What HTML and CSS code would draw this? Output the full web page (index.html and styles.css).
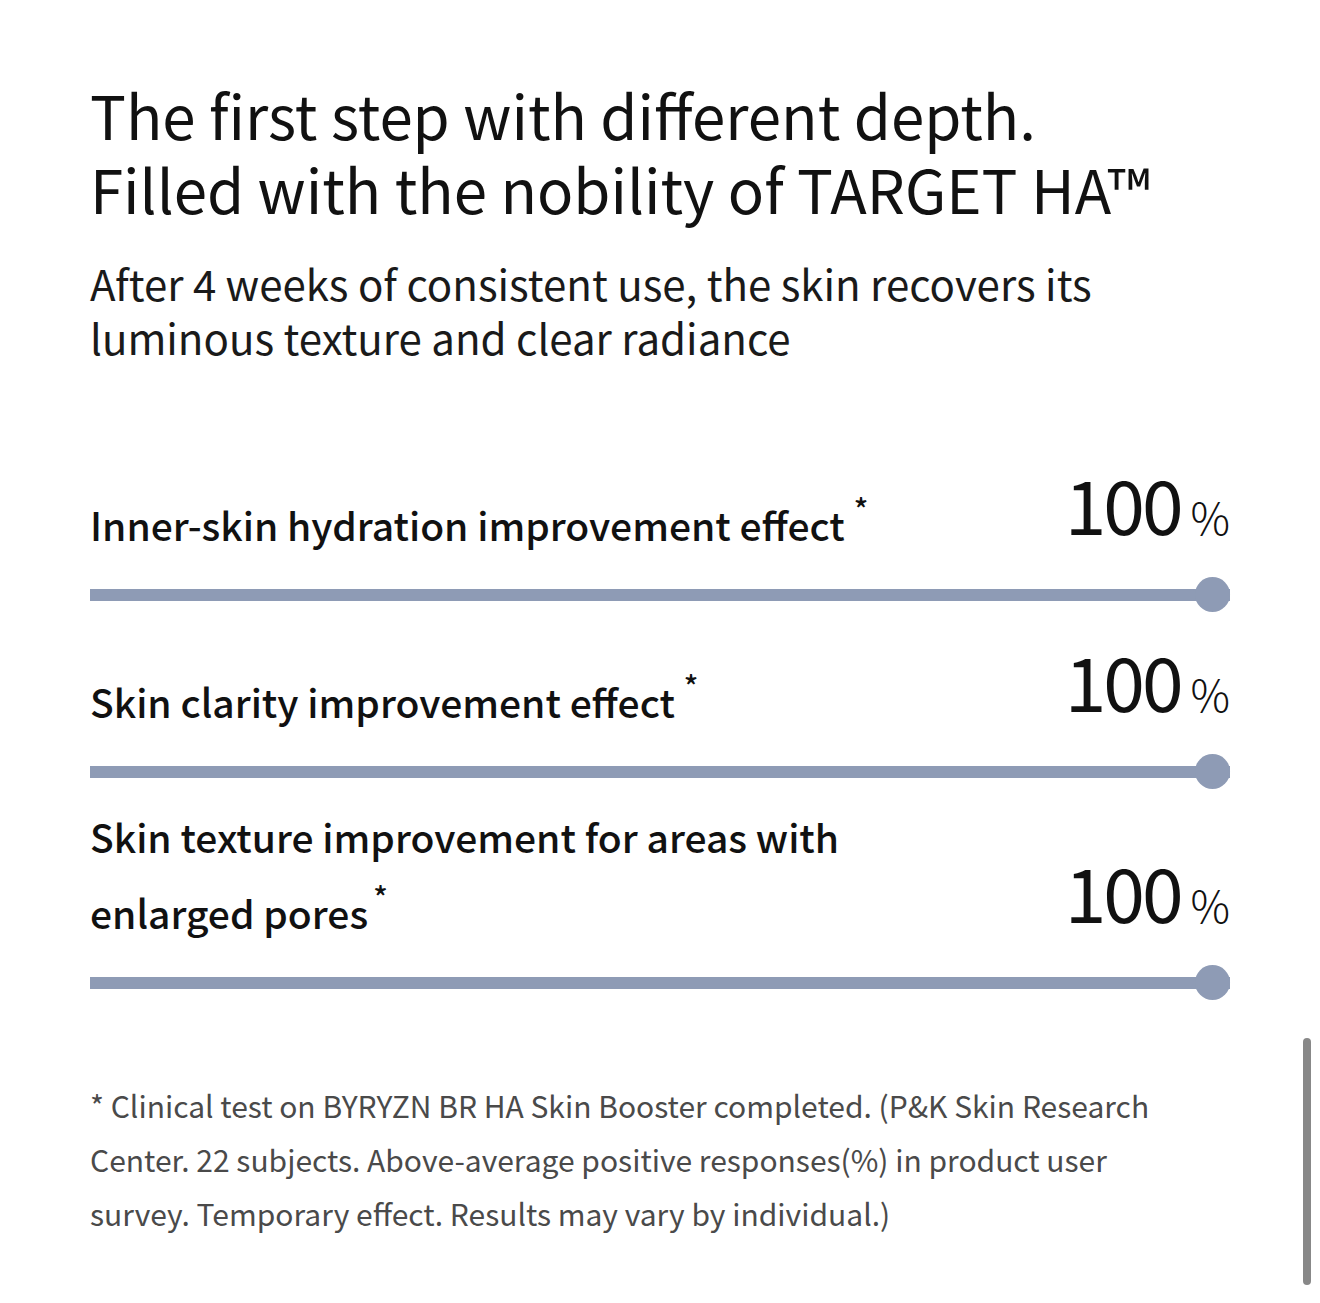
FILE: index.html
```html
<!DOCTYPE html>
<html lang="en">
<head>
<meta charset="utf-8">
<title>TARGET HA</title>
<link rel="stylesheet" href="styles.css">
</head>
<body>
<main class="page">
  <h1 class="title">The first step with different depth.<br>Filled with the nobility of TARGET HA™</h1>
  <p class="lead">After 4 weeks of consistent use, the skin recovers its<br>luminous texture and clear radiance</p>

  <section class="stats">
    <div class="stat">
      <div class="stat-head">
        <p class="stat-label">Inner-skin hydration improvement effect<sup class="mark">*</sup></p>
        <p class="stat-value"><span class="num">100</span><span class="pct">%</span></p>
      </div>
      <div class="bar"><div class="bar-fill" style="width:100%"></div><span class="knob"></span></div>
    </div>
    <div class="stat">
      <div class="stat-head">
        <p class="stat-label">Skin clarity improvement effect<sup class="mark">*</sup></p>
        <p class="stat-value"><span class="num">100</span><span class="pct">%</span></p>
      </div>
      <div class="bar"><div class="bar-fill" style="width:100%"></div><span class="knob"></span></div>
    </div>
    <div class="stat">
      <div class="stat-head">
        <p class="stat-label">Skin texture improvement for areas with<br>enlarged pores<sup class="mark tight">*</sup></p>
        <p class="stat-value"><span class="num">100</span><span class="pct">%</span></p>
      </div>
      <div class="bar"><div class="bar-fill" style="width:100%"></div><span class="knob"></span></div>
    </div>
  </section>

  <p class="note">* Clinical test on BYRYZN BR HA Skin Booster completed. (P&amp;K Skin Research<br>Center. 22 subjects. Above-average positive responses(%) in product user<br>survey. Temporary effect. Results may vary by individual.)</p>
</main>
<div class="scrollbar"></div>
</body>
</html>
```

FILE: styles.css
```css
html, body {
  margin: 0;
  padding: 0;
  background: #ffffff;
}

body {
  font-family: "Noto Sans CJK KR", "Noto Sans", sans-serif;
  color: #111111;
}

.page {
  padding: 77px 90px 40px 90px;
}

.title {
  margin: 0;
  font-size: 60px;
  font-weight: 400;
  line-height: 74px;
  color: #111111;
}

.lead {
  margin: 31px 0 0 0;
  font-size: 42px;
  font-weight: 400;
  line-height: 54px;
  color: #1a1a1a;
}

.stats {
  margin-top: 80px;
  display: flex;
  flex-direction: column;
  gap: 9px;
}

.stat-head {
  display: flex;
  justify-content: space-between;
  align-items: flex-end;
  min-height: 118px;
}

.stat-label {
  margin: 0;
  font-size: 39px;
  font-weight: 500;
  line-height: 76px;
  color: #111111;
}

.mark {
  font-size: 30px;
  line-height: 1;
  margin-left: 9px;
  vertical-align: 0;
  position: relative;
  top: -20px;
}

.mark.tight {
  margin-left: 5px;
}

.stat-value {
  margin: 0;
  font-size: 75px;
  line-height: 118px;
  white-space: nowrap;
  color: #111111;
}

.num {
  font-weight: 400;
  letter-spacing: -3px;
}

.pct {
  font-size: 44px;
  font-weight: 300;
  line-height: 1;
  margin-left: 10px;
}

.bar {
  position: relative;
  margin-top: 15px;
  height: 35px;
  display: flex;
  align-items: center;
}

.bar-fill {
  height: 12px;
  background: #8e9bb5;
}

.knob {
  position: absolute;
  right: 0;
  top: 0;
  width: 35px;
  height: 35px;
  border-radius: 50%;
  background: #8e9bb5;
}

.note {
  margin: 78px 0 0 0;
  font-size: 30px;
  font-weight: 400;
  line-height: 54px;
  color: #4a4a4a;
}

.scrollbar {
  position: fixed;
  left: 1303px;
  top: 1038px;
  width: 8px;
  height: 247px;
  border-radius: 4px;
  background: #888888;
}
```
